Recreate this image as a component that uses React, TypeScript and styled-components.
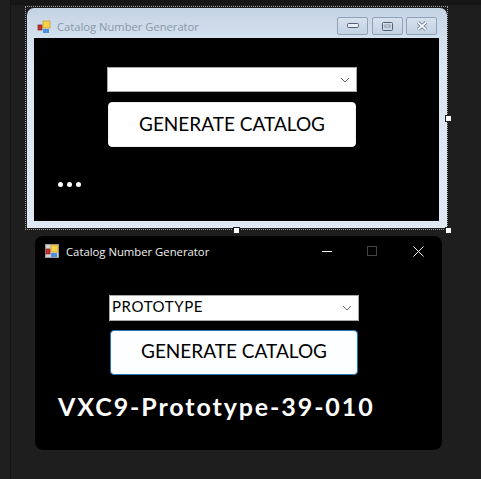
import React from "react";
import styled, { createGlobalStyle } from "styled-components";

const Global = createGlobalStyle`
  html, body { margin: 0; padding: 0; background: #1e1e1e; }
  #root { width: 481px; height: 479px; overflow: hidden; }
`;

const comic = `Lato, "Open Sans", sans-serif`;
const ui = `"Open Sans", "Noto Sans", sans-serif`;

const Desktop = styled.div`
  position: relative;
  width: 481px;
  height: 479px;
  background: #1e1e1e;
  display: flex;
  overflow: hidden;
`;

const Rail = styled.div`
  width: 10px;
  background: #1f1f1f;
  border-right: 1px solid #141414;
  flex: none;
`;

const Stage = styled.div`
  flex: 1;
  display: flex;
  flex-direction: column;
`;

const TopStrip = styled.div`
  height: 5px;
  background: #161616;
  flex: none;
`;

const Selection = styled.div`
  position: absolute;
  left: 25px;
  top: 6px;
  width: 423px;
  height: 224px;
  box-sizing: border-box;
  border: 1px dotted #9a9a9a;
  padding: 1px;
`;

const Handle = styled.span<{ $x: number; $y: number }>`
  position: absolute;
  left: ${(p) => p.$x}px;
  top: ${(p) => p.$y}px;
  width: 5px;
  height: 5px;
  background: #fff;
  border: 1px solid #222;
  box-sizing: content-box;
  margin: -1px;
`;

const AeroWindow = styled.div`
  width: 420px;
  height: 220px;
  box-sizing: border-box;
  padding: 0 8px 7px 7px;
  border-radius: 7px 7px 0 0;
  background: linear-gradient(180deg, #c4d3e3 0, #d3e0ee 30px, #dbe6f3 60px, #dfe8f4 100%);
  display: flex;
  flex-direction: column;
`;

const AeroTitle = styled.div`
  height: 30px;
  box-sizing: border-box;
  padding: 8px 2px 0 3px;
  flex: none;
  display: flex;
  align-items: center;
  gap: 6px;
`;

const AeroCaption = styled.span`
  font: 11.2px ${ui};
  color: #8b97a6;
  flex: 1;
  margin-bottom: 2px;
`;

const AeroButtons = styled.div`
  display: flex;
  gap: 3.5px;
  margin-bottom: 2px;
`;

const AeroButton = styled.div`
  width: 31px;
  height: 18px;
  box-sizing: border-box;
  border: 1px solid #8ea3bb;
  border-radius: 2px;
  background: linear-gradient(180deg, #d6e1ed, #c3d1e2);
  display: flex;
  align-items: center;
  justify-content: center;
`;

const Client = styled.div`
  flex: 1;
  background: #000;
  display: flex;
  flex-direction: column;
`;

const DesignBody = styled(Client)`
  padding: 29px 0 0 73px;
`;

const Combo = styled.div<{ $h: number }>`
  width: 250px;
  height: ${(p) => p.$h}px;
  box-sizing: border-box;
  background: #fff;
  border: 1px solid #a9a9a9;
  display: flex;
  align-items: center;
  justify-content: space-between;
  padding: 0 6px 0 2px;
  flex: none;
`;

const ComboText = styled.span`
  font: 400 15px ${comic};
  color: #000;
  letter-spacing: 0.6px;
  margin-bottom: 5px;
`;

const GenerateButton = styled.button<{ $focused?: boolean }>`
  width: 248px;
  height: 45px;
  flex: none;
  box-sizing: border-box;
  margin: ${(p) => (p.$focused ? 9 : 10)}px 0 0 1px;
  padding: 0 0 ${(p) => (p.$focused ? 4 : 3)}px;
  background: ${(p) => (p.$focused ? "#fdfeff" : "#fff")};
  border: ${(p) => (p.$focused ? "1.5px solid #1f78b8" : "1px solid #eee")};
  border-radius: 4px;
  font: 400 19px ${comic};
  color: #000;
  letter-spacing: 0;
`;

const Dots = styled.div`
  display: flex;
  gap: 4px;
  margin: 35px 0 0 -49px;
`;

const Dot = styled.span`
  width: 5px;
  height: 5px;
  border-radius: 50%;
  background: #fff;
`;

const DarkWindow = styled.div`
  position: absolute;
  left: 35px;
  top: 236px;
  width: 407px;
  height: 214px;
  background: #000;
  border-radius: 8px;
  display: flex;
  flex-direction: column;
`;

const DarkTitle = styled.div`
  height: 30px;
  flex: none;
  display: flex;
  align-items: center;
  padding-left: 10px;
  gap: 7px;
`;

const DarkCaption = styled.span`
  font: 11.3px ${ui};
  color: #f0f0f0;
  flex: 1;
`;

const Controls = styled.div`
  display: flex;
  margin-right: 18px;
  gap: 35px;
  align-items: center;
  & > svg:last-child {
    margin-left: 1px;
  }
`;

const DarkBody = styled.div`
  padding: 29px 0 0 74px;
  display: flex;
  flex-direction: column;
`;

const Output = styled.div`
  margin: 15px 0 0 -51px;
  font: 700 25px ${comic};
  color: #fff;
  letter-spacing: 1.9px;
  white-space: nowrap;
  line-height: 32px;
`;

const Chevron = () => (
  <svg width="10" height="6" viewBox="0 0 10 6" fill="none">
    <path d="M1 1l4 4 4-4" stroke="#666" strokeWidth="1" />
  </svg>
);

const FormIcon = ({ framed }: { framed?: boolean }) => (
  <svg width="14" height="14" viewBox="0 0 14 14">
    {framed && <rect x="0.5" y="0.5" width="13" height="13" fill="#d5d5d5" stroke="#999" />}
    <rect x="1" y="5" width="4" height="5" fill="#c9302c" stroke="#7d1d1a" strokeWidth="0.7" />
    <rect x="6" y="1" width="7" height="7" fill="#f6d24b" stroke="#c49a26" strokeWidth="0.7" />
    <rect x="6" y="9" width="6" height="4" fill="#4f8fe0" />
  </svg>
);

export default function App() {
  return (
    <Desktop>
      <Global />
      <Rail />
      <Stage>
        <TopStrip />
      </Stage>
      <Selection>
        <AeroWindow>
          <AeroTitle>
            <FormIcon />
            <AeroCaption>Catalog Number Generator</AeroCaption>
            <AeroButtons>
              <AeroButton>
                <svg width="12" height="6" viewBox="0 0 12 6">
                  <rect x="0.5" y="0.5" width="11" height="4" rx="1" fill="#e8eef5" stroke="#50607a" />
                </svg>
              </AeroButton>
              <AeroButton>
                <svg width="11" height="9" viewBox="0 0 11 9">
                  <rect x="0.5" y="0.5" width="10" height="8" rx="1" fill="none" stroke="#50607a" />
                  <rect x="3" y="3" width="5" height="2" fill="#eef2f7" stroke="#50607a" strokeWidth="0.6" />
                </svg>
              </AeroButton>
              <AeroButton>
                <svg width="12" height="10" viewBox="0 0 12 10">
                  <path d="M2 1.5l8 7M10 1.5l-8 7" stroke="#65758c" strokeWidth="3.6" />
                  <path d="M2 1.5l8 7M10 1.5l-8 7" stroke="#f4f6f9" strokeWidth="1.8" />
                </svg>
              </AeroButton>
            </AeroButtons>
          </AeroTitle>
          <DesignBody>
            <Combo $h={25}>
              <span />
              <Chevron />
            </Combo>
            <GenerateButton>GENERATE CATALOG</GenerateButton>
            <Dots>
              <Dot />
              <Dot />
              <Dot />
            </Dots>
          </DesignBody>
        </AeroWindow>
      </Selection>
      <Handle $x={446} $y={116} />
      <Handle $x={446} $y={228} />
      <Handle $x={234} $y={228} />
      <DarkWindow>
        <DarkTitle>
          <FormIcon framed />
          <DarkCaption>Catalog Number Generator</DarkCaption>
          <Controls>
            <svg width="10" height="10" viewBox="0 0 10 10">
              <path d="M0 5.5h10" stroke="#fff" />
            </svg>
            <svg width="10" height="10" viewBox="0 0 10 10">
              <rect x="0.5" y="0.5" width="9" height="9" fill="none" stroke="#444" />
            </svg>
            <svg width="11" height="11" viewBox="0 0 11 11">
              <path d="M0.5 0.5l10 10M10.5 0.5l-10 10" stroke="#eee" />
            </svg>
          </Controls>
        </DarkTitle>
        <DarkBody>
          <Combo $h={26}>
            <ComboText>PROTOTYPE</ComboText>
            <Chevron />
          </Combo>
          <GenerateButton $focused>GENERATE CATALOG</GenerateButton>
          <Output>VXC9-Prototype-39-010</Output>
        </DarkBody>
      </DarkWindow>
    </Desktop>
  );
}
